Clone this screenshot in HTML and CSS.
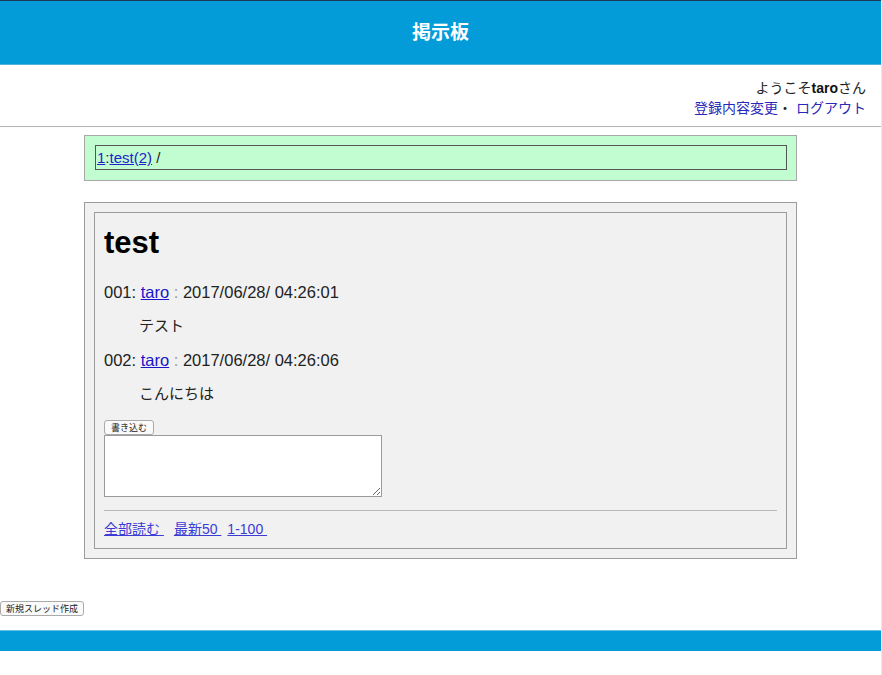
FILE: index.html
```html
<!DOCTYPE html>
<html lang="ja">
<head>
<meta charset="utf-8">
<title>掲示板</title>
<link rel="stylesheet" href="styles.css">
</head>
<body>
<header class="site-header">
  <h1 class="site-title">掲示板</h1>
</header>
<div class="user-info">
  <div class="welcome">ようこそ<b>taro</b>さん</div>
  <div class="user-links"><a href="#">登録内容変更</a>・ <a href="#">ログアウト</a></div>
</div>
<hr class="rule">
<main class="main">
  <nav class="crumbs">
    <div class="crumbs-inner"><a href="#">1</a>:<a href="#">test(2)</a> /</div>
  </nav>
  <section class="thread">
    <div class="thread-inner">
      <h2 class="thread-title">test</h2>
      <p class="post-meta">001: <a href="#">taro</a> <span class="colon">:</span> 2017/06/28/ 04:26:01</p>
      <p class="post-body">テスト</p>
      <p class="post-meta">002: <a href="#">taro</a> <span class="colon">:</span> 2017/06/28/ 04:26:06</p>
      <p class="post-body">こんにちは</p>
      <form class="reply">
        <button type="button" class="btn">書き込む</button>
        <textarea class="reply-text"></textarea>
      </form>
      <hr class="thread-rule">
      <div class="thread-links"><a href="#" class="tl-all">全部読む&nbsp;</a><a href="#" class="tl-latest">最新50&nbsp;</a><a href="#">1-100&nbsp;</a></div>
    </div>
  </section>
</main>
<div class="new-thread"><button type="button" class="btn btn-new">新規スレッド作成</button></div>
<footer class="site-footer"></footer>
</body>
</html>
```
FILE: styles.css
```css
html, body {
  margin: 0;
  padding: 0;
  background: #fff;
}
body {
  font-family: "Liberation Sans", "Noto Sans CJK JP", sans-serif;
  color: #222;
  border-right: 1px solid #e8e8e8;
  min-height: 675px;
  box-sizing: border-box;
}
.site-header {
  height: 63px;
  background: #039bd8;
  border-top: 1px solid #1d3b58;
  border-bottom: 1px solid #4fb3dc;
  display: flex;
  align-items: center;
  justify-content: center;
}
.site-title {
  margin: 0;
  color: #fff;
  font-size: 19px;
  font-weight: bold;
  line-height: 1;
}
.user-info {
  padding: 13px 15px 0 0;
  text-align: right;
  font-size: 14px;
  line-height: 20px;
}
.welcome b {
  font-weight: bold;
  color: #111;
}
.user-links a {
  color: #2929b8;
  text-decoration: none;
}
.rule {
  margin: 8px 0 0;
  border: 0;
  border-top: 1px solid #b4b4b4;
  height: 0;
}
.main {
  width: 713px;
  margin: 8px auto 0;
}
.crumbs {
  background: #c2fcd1;
  border: 1px solid #a8a8a8;
  padding: 9px 9px 10px 10px;
}
.crumbs-inner {
  border: 1px solid #555;
  height: 23px;
  line-height: 23px;
  font-size: 15px;
  padding-left: 1px;
  color: #222;
}
.crumbs-inner a {
  color: #2222cc;
  text-decoration: underline;
}
.thread {
  margin-top: 21px;
  background: #f1f1f1;
  border: 1px solid #9c9c9c;
  padding: 9px;
}
.thread-inner {
  border: 1px solid #9c9c9c;
  padding: 13px 9px 9px 9px;
}
.thread-title {
  margin: 0;
  font-size: 31px;
  line-height: 34px;
  font-weight: bold;
  color: #000;
}
.post-meta, .post-body {
  margin: 14px 0 0;
  font-size: 15px;
  line-height: 20px;
  color: #222;
}
.post-meta {
  font-size: 16.5px;
}
.thread-title + .post-meta {
  margin-top: 22px;
}
.post-meta a {
  color: #1a14c8;
  text-decoration: underline;
}
.colon {
  color: #999;
}
.post-body {
  padding-left: 35px;
}
.reply {
  margin-top: 16px;
  display: flex;
  flex-direction: column;
  align-items: flex-start;
}
.btn {
  font-family: "Noto Sans CJK JP", sans-serif;
  font-size: 9px;
  line-height: 11px;
  padding: 1px 6px;
  background: #fafafa;
  border: 1px solid #aaa;
  border-radius: 3px;
  color: #222;
  margin: 0;
}
.reply-text {
  width: 278px;
  height: 62px;
  box-sizing: border-box;
  border: 1px solid #9a9a9a;
  background: #fff;
  margin: 0;
}
.thread-rule {
  margin: 13px 0 0;
  border: 0;
  border-top: 1px solid #b8b8b8;
  height: 0;
}
.thread-links {
  margin-top: 8px;
  font-size: 14px;
  line-height: 20px;
}
.thread-links a {
  color: #3b3bd6;
  text-decoration: underline;
}
.tl-all {
  margin-right: 10px;
}
.tl-latest {
  margin-right: 6px;
}
.new-thread {
  margin-top: 42px;
  line-height: 0;
}
.btn-new {
  padding: 1px 5px;
}
.site-footer {
  margin-top: 14px;
  height: 20px;
  background: #039bd8;
  border-top: 1px solid #66c3ea;
}
```
